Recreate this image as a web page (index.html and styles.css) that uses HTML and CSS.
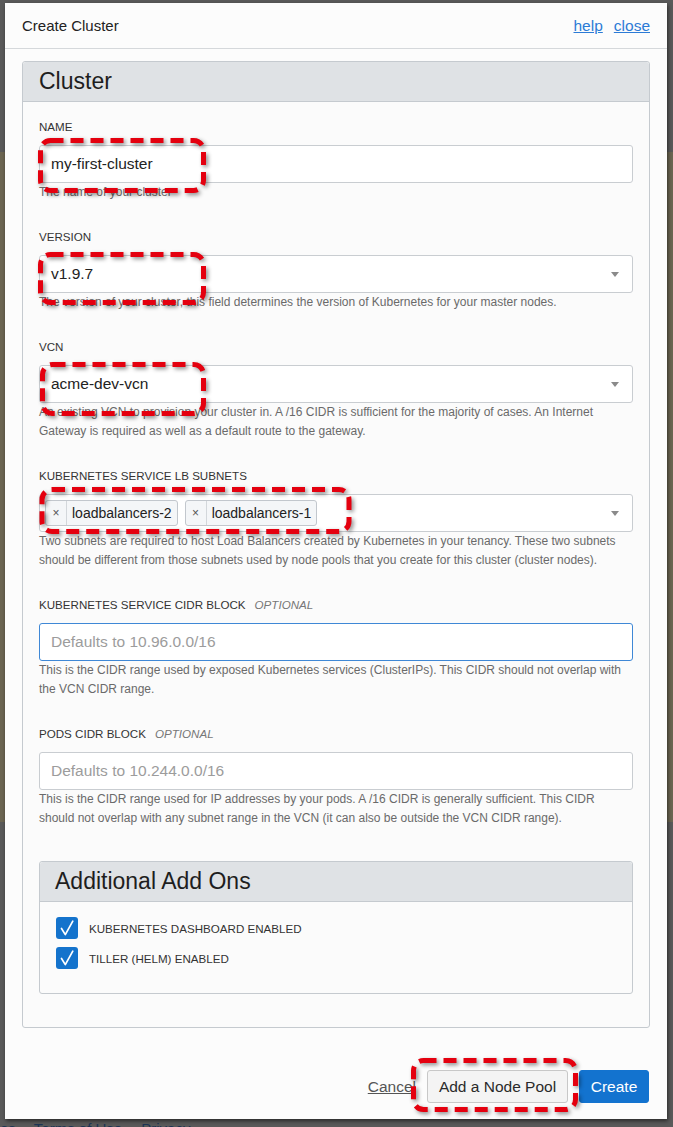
FILE: index.html
```html
<!DOCTYPE html>
<html lang="en">
<head>
<meta charset="utf-8">
<title>Create Cluster</title>
<link rel="stylesheet" href="styles.css">
</head>
<body>
<div class="modal">
  <div class="modal-header">
    <h1 class="modal-title">Create Cluster</h1>
    <div class="header-links"><a class="link">help</a><a class="link">close</a></div>
  </div>
  <div class="modal-body">
    <section class="panel">
      <div class="panel-head"><h2 class="panel-title">Cluster</h2></div>
      <div class="panel-body">
        <div class="field">
          <label class="field-label">NAME</label>
          <div class="control">my-first-cluster</div>
          <p class="help">The name of your cluster</p>
        </div>
        <div class="field">
          <label class="field-label">VERSION</label>
          <div class="control select">v1.9.7<span class="caret"></span></div>
          <p class="help">The version of your cluster, this field determines the version of Kubernetes for your master nodes.</p>
        </div>
        <div class="field">
          <label class="field-label">VCN</label>
          <div class="control select">acme-dev-vcn<span class="caret"></span></div>
          <p class="help">An existing VCN to provision your cluster in. A /16 CIDR is sufficient for the majority of cases. An Internet Gateway is required as well as a default route to the gateway.</p>
        </div>
        <div class="field">
          <label class="field-label">KUBERNETES SERVICE LB SUBNETS</label>
          <div class="control select tags">
            <span class="chip"><span class="chip-x">×</span><span class="chip-text">loadbalancers-2</span></span>
            <span class="chip"><span class="chip-x">×</span><span class="chip-text">loadbalancers-1</span></span>
            <span class="caret"></span>
          </div>
          <p class="help">Two subnets are required to host Load Balancers created by Kubernetes in your tenancy. These two subnets should be different from those subnets used by node pools that you create for this cluster (cluster nodes).</p>
        </div>
        <div class="field">
          <label class="field-label">KUBERNETES SERVICE CIDR BLOCK<span class="optional">OPTIONAL</span></label>
          <div class="control focus"><span class="placeholder">Defaults to 10.96.0.0/16</span></div>
          <p class="help">This is the CIDR range used by exposed Kubernetes services (ClusterIPs). This CIDR should not overlap with the VCN CIDR range.</p>
        </div>
        <div class="field">
          <label class="field-label">PODS CIDR BLOCK<span class="optional">OPTIONAL</span></label>
          <div class="control"><span class="placeholder">Defaults to 10.244.0.0/16</span></div>
          <p class="help">This is the CIDR range used for IP addresses by your pods. A /16 CIDR is generally sufficient. This CIDR should not overlap with any subnet range in the VCN (it can also be outside the VCN CIDR range).</p>
        </div>
        <section class="panel sub">
          <div class="panel-head sub-head"><h2 class="panel-title">Additional Add Ons</h2></div>
          <div class="sub-body">
            <div class="check">
              <svg class="check-box" width="22" height="22" viewBox="0 0 22 22"><rect x="0" y="0" width="22" height="22" rx="3" fill="#1473cc"/><path d="M5.5 11.5 L9.3 17.6 L16.8 4.2" fill="none" stroke="#fff" stroke-width="1.7" stroke-linecap="round" stroke-linejoin="round"/></svg>
              <span>KUBERNETES DASHBOARD ENABLED</span>
            </div>
            <div class="check">
              <svg class="check-box" width="22" height="22" viewBox="0 0 22 22"><rect x="0" y="0" width="22" height="22" rx="3" fill="#1473cc"/><path d="M5.5 11.5 L9.3 17.6 L16.8 4.2" fill="none" stroke="#fff" stroke-width="1.7" stroke-linecap="round" stroke-linejoin="round"/></svg>
              <span>TILLER (HELM) ENABLED</span>
            </div>
          </div>
        </section>
      </div>
    </section>
  </div>
  <div class="modal-footer">
    <a class="cancel">Cancel</a>
    <button class="btn btn-secondary">Add a Node Pool</button>
    <button class="btn btn-primary">Create</button>
  </div>
</div>
<div class="page-footer"><span class="pf-a">es</span><span class="pf-b">Terms of Use</span><span class="pf-c">Privacy</span></div>

<svg class="annotations" width="673" height="1127" viewBox="0 0 673 1127">
  <g class="marks" fill="none" stroke="#e4000f" stroke-width="5" stroke-dasharray="13 7">
    <rect x="40.5" y="140.5" width="163" height="50" rx="10"/>
    <rect x="40.5" y="254.5" width="163" height="48" rx="10"/>
    <rect x="42.5" y="364.5" width="161" height="49" rx="10"/>
    <rect x="42" y="489.5" width="307" height="42" rx="10"/>
    <rect x="413.5" y="1060.5" width="162" height="49" rx="10"/>
  </g>
</svg>
</body>
</html>
```

FILE: styles.css
```css
html, body {
  margin: 0;
  padding: 0;
}

body {
  position: relative;
  width: 673px;
  height: 1127px;
  overflow: hidden;
  font-family: "Liberation Sans", Arial, sans-serif;
  background: linear-gradient(to bottom, #5a5a5a 0, #5a5a5a 152px, #6c6652 152px, #6c6652 822px, #5a5a5a 822px);
}

.modal {
  margin: 3px 0 0 5px;
  width: 662px;
  background: #fcfcfc;
  box-shadow: 1px 2px 4px rgba(0, 0, 0, 0.55);
}

.modal-header {
  height: 46px;
  box-sizing: border-box;
  display: flex;
  align-items: center;
  justify-content: space-between;
  padding: 0 17px;
  border-bottom: 1px solid #d5d8db;
}

.modal-title {
  margin: 0;
  font-size: 15px;
  font-weight: normal;
  color: #222;
}

.header-links {
  display: flex;
  gap: 11px;
}

.link {
  font-size: 15.5px;
  color: #2c7bd6;
  text-decoration: underline;
  cursor: pointer;
}

.modal-body {
  padding: 12px 17px 0;
}

.panel {
  border: 1px solid #c5cacf;
  border-radius: 3px;
  background: #fbfbfb;
}

.panel-head {
  height: 39px;
  display: flex;
  align-items: center;
  padding: 0 16px;
  background: #dfe2e5;
  border-bottom: 1px solid #c5cacf;
  border-radius: 3px 3px 0 0;
}

.panel-title {
  margin: 0;
  font-size: 23px;
  font-weight: normal;
  color: #1e1e1e;
}

.panel-body {
  padding: 17px 16px 33px;
}

.field {
  margin-bottom: 27px;
}

.field-label {
  display: block;
  font-size: 11.6px;
  line-height: 16px;
  color: #333;
  margin-bottom: 10px;
}

.optional {
  font-style: italic;
  color: #777;
  margin-left: 9px;
}

.control {
  height: 38px;
  box-sizing: border-box;
  display: flex;
  align-items: center;
  padding: 0 13px 0 11px;
  border: 1px solid #c9cdd1;
  border-radius: 3px;
  background: #fff;
  font-size: 15.5px;
  color: #222;
}

.control.focus {
  border-color: #3f88d6;
}

.control.tags {
  padding-left: 5px;
  gap: 7px;
}

.placeholder {
  color: #9c9c9c;
}

.caret {
  margin-left: auto;
  width: 0;
  height: 0;
  border-left: 4.5px solid transparent;
  border-right: 4.5px solid transparent;
  border-top: 5px solid #8a8a8a;
}

.chip {
  display: flex;
  align-items: stretch;
  height: 26px;
  box-sizing: border-box;
  border: 1px solid #c2c7cd;
  border-radius: 3px;
  background: #f4f6f8;
}

.chip-x {
  width: 20px;
  display: flex;
  align-items: center;
  justify-content: center;
  border-right: 1px solid #d3d7db;
  font-size: 12px;
  color: #555;
}

.chip-text {
  display: flex;
  align-items: center;
  padding: 0 5px;
  font-size: 14px;
  color: #222;
}

.help {
  margin: 0;
  font-size: 12px;
  line-height: 19px;
  color: #6a6a6a;
}

.panel.sub {
  margin-top: 33px;
}

.sub-head {
  padding: 0 15px;
}

.sub-body {
  display: flex;
  flex-direction: column;
  gap: 8px;
  padding: 15px 16px 24px;
}

.check {
  display: flex;
  align-items: center;
  gap: 11px;
  font-size: 11.6px;
  color: #333;
}

.check-box {
  display: block;
  flex: none;
}

.modal-footer {
  display: flex;
  justify-content: flex-end;
  align-items: center;
  gap: 11px;
  padding: 42px 18px 16px;
}

.cancel {
  font-size: 15.5px;
  color: #555;
  text-decoration: underline;
  cursor: pointer;
}

.btn {
  height: 33px;
  box-sizing: border-box;
  border-radius: 3px;
  font-family: inherit;
  font-size: 15.5px;
  padding: 0;
  cursor: pointer;
}

.btn-secondary {
  width: 141px;
  background: #f4f4f4;
  border: 1px solid #c8c8c8;
  color: #2a2a2a;
}

.btn-primary {
  width: 70px;
  background: #1373cf;
  border: 1px solid #1373cf;
  color: #fff;
}

.page-footer {
  height: 20px;
  font-size: 15px;
  line-height: 20px;
  color: #1c3453;
  white-space: nowrap;
}

.pf-a {
  margin-left: 0;
}

.pf-b {
  margin-left: 18px;
}

.pf-c {
  margin-left: 19px;
}

.annotations {
  position: absolute;
  top: 0;
  left: 0;
  pointer-events: none;
}

.marks {
  filter: drop-shadow(2px 2px 2px rgba(0, 0, 0, 0.45));
}
```
